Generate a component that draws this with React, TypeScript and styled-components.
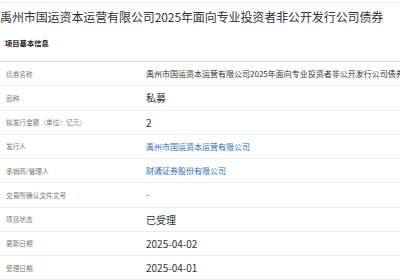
import styled, { createGlobalStyle } from 'styled-components';

const GlobalStyle = createGlobalStyle`
  html, body {
    margin: 0;
    padding: 0;
    background: #fff;
    overflow: hidden;
  }
  body {
    font-family: "Noto Sans CJK SC", "Noto Sans", sans-serif;
    color: #333;
  }
`;

type Row = {
  label: string
  value: string
  kind?: 'link' | 'long' | 'plain'
}

const rows: Row[] = [
  { label: '债券名称', value: '禹州市国运资本运营有限公司2025年面向专业投资者非公开发行公司债券', kind: 'long' },
  { label: '品种', value: '私募' },
  { label: '拟发行金额（单位：亿元）', value: '2' },
  { label: '发行人', value: '禹州市国运资本运营有限公司', kind: 'link' },
  { label: '承销商/管理人', value: '财通证券股份有限公司', kind: 'link' },
  { label: '交易所确认文件文号', value: '-', kind: 'long' },
  { label: '项目状态', value: '已受理' },
  { label: '更新日期', value: '2025-04-02' },
  { label: '受理日期', value: '2025-04-01' },
];

const Page = styled.div`
  margin-top: 2px;
  border-top: 1px solid #ececec;
  width: 400px;
  white-space: nowrap;
`;

const Title = styled.h1`
  margin: 0;
  padding: 6px 0 0 0;
  height: 22px;
  font-size: 12px;
  line-height: 16px;
  font-weight: 400;
  color: #333;
  letter-spacing: -0.1px;
`;

const Section = styled.h2`
  margin: 0;
  padding: 0 5px;
  height: 30px;
  font-size: 7.3px;
  line-height: 24px;
  font-weight: 700;
  color: #222;
`;

const Table = styled.div`
  border-top: 1px solid #dcdcdc;
  display: flex;
  flex-direction: column;
`;

const Line = styled.div`
  display: grid;
  grid-template-columns: 146px 1fr;
  align-items: center;
  height: 24.25px;
  box-sizing: border-box;
  border-bottom: 1px solid #ededed;
`;

const Label = styled.div`
  padding-left: 6px;
  font-size: 6.7px;
  color: #777;
`;

const Value = styled.div<{ $kind?: Row['kind'] }>`
  font-size: ${ p => (p.$kind === 'link' || p.$kind === 'long') ? '8px' : '10px' };
  color: ${ p => p.$kind === 'link' ? '#2d6cb4' : '#333' };
  overflow: visible;
`;

export default function App() {
  return (
    <>
      <GlobalStyle />
      <Page>
        <Title>禹州市国运资本运营有限公司2025年面向专业投资者非公开发行公司债券</Title>
        <Section>项目基本信息</Section>
        <Table>
          { rows.map(r => (
            <Line key={ r.label }>
              <Label>{ r.label }</Label>
              <Value $kind={ r.kind }>{ r.value }</Value>
            </Line>
          )) }
        </Table>
      </Page>
    </>
  );
}
